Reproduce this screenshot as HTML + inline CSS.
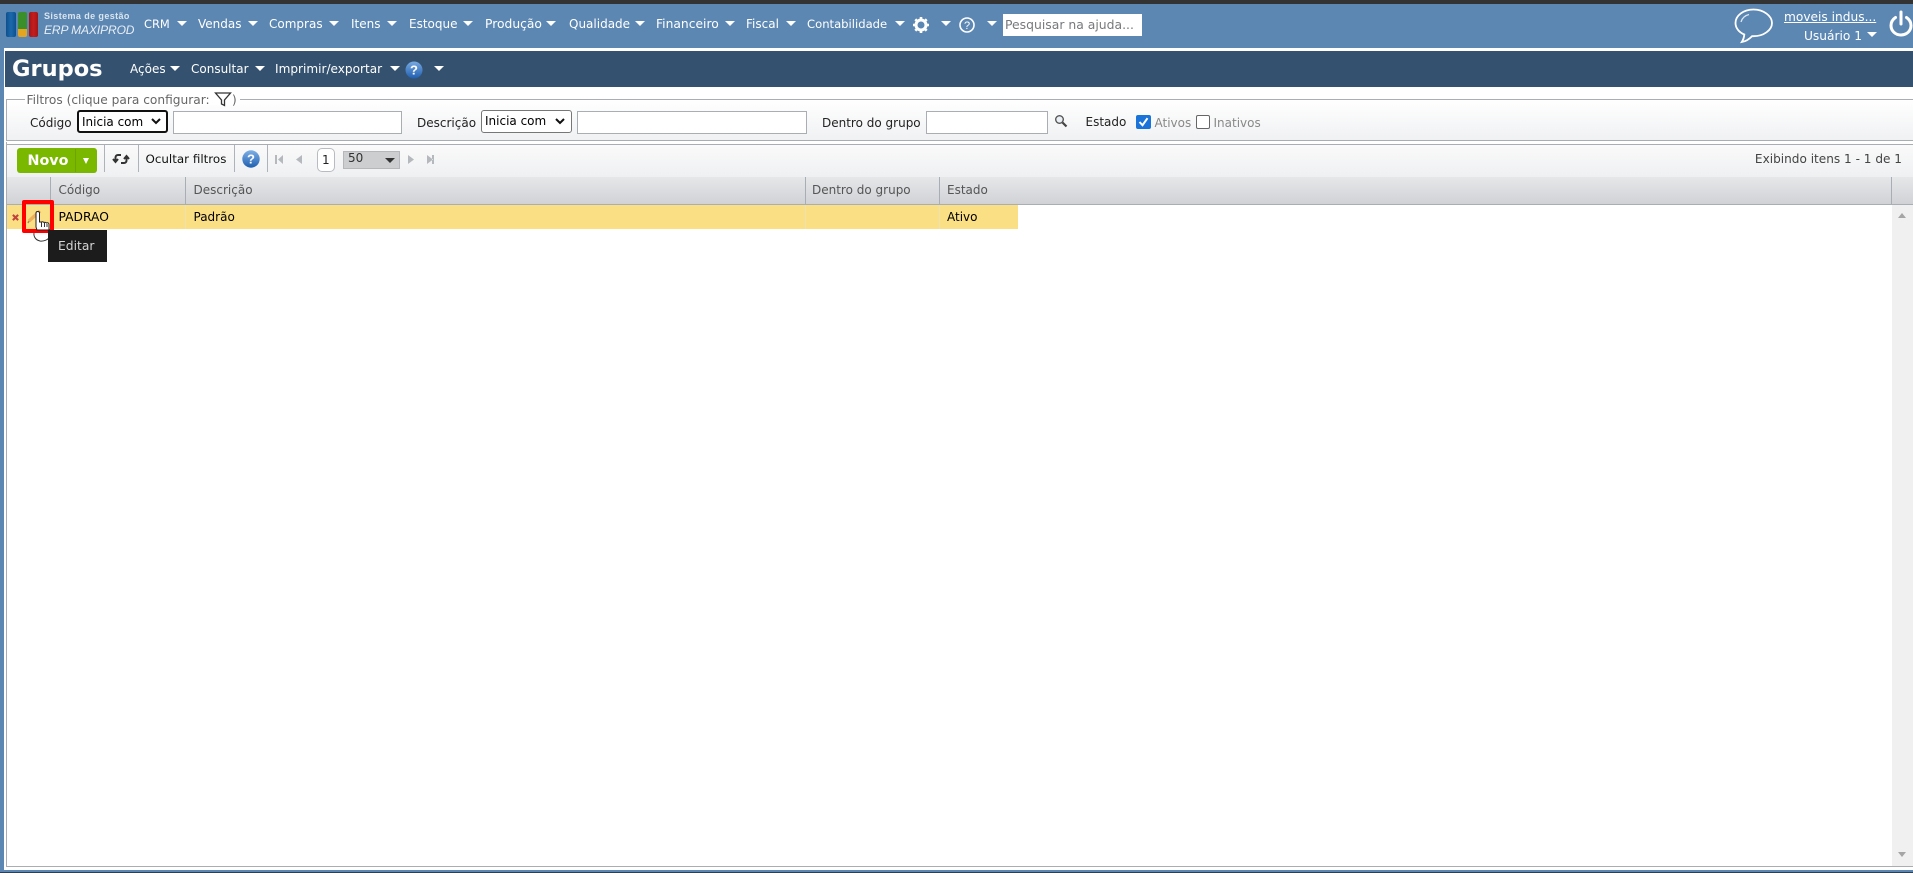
<!DOCTYPE html>
<html lang="pt-BR">
<head>
<meta charset="utf-8">
<title>Grupos</title>
<style>
html,body{margin:0;padding:0;width:1913px;height:873px;overflow:hidden;background:#fff}
body{position:relative;font:12px/14px "DejaVu Sans","Liberation Sans",sans-serif;color:#000}
.a{position:absolute;white-space:nowrap}
.b{position:absolute}
.n{position:absolute;white-space:nowrap;color:#fff;top:17px;font-size:12px;line-height:15px}
.c{position:absolute;width:0;height:0;border-left:5px solid transparent;border-right:5px solid transparent;border-top:5px solid #fff}
.l{position:absolute;white-space:nowrap;top:116px;font-size:12px;line-height:14px;color:#222}
.g{position:absolute;white-space:nowrap;color:#888;font-size:12px;line-height:14px;top:116px}
.i{position:absolute;box-sizing:border-box;background:#fff;border:1px solid #a9aeb3;top:111px;height:23px}
.s{position:absolute;box-sizing:border-box;background:#fff;top:110px;height:23px;font-size:12px;line-height:20px;padding-left:3px;white-space:nowrap}
.sep{position:absolute;width:1px;background:#aeb3b9;top:145px;height:27px}
.h{position:absolute;top:177px;height:27px;line-height:27px;color:#555;font-size:12px;white-space:nowrap}
.hs{position:absolute;top:177px;width:1px;height:27px;background:#a9aeb5}
.rs{position:absolute;top:205px;width:1px;height:24px;background:#efe2b0}
.t{position:absolute;top:210px;line-height:14px;font-size:12px;white-space:nowrap;color:#000}
svg{position:absolute;display:block;overflow:visible}
</style>
</head>
<body>
<!-- top frame -->
<div class="b" style="left:0;top:0;width:1913px;height:4px;background:#333"></div>
<div class="b" style="left:0;top:4px;width:1913px;height:44px;background:#5c87b2"></div>
<div class="b" style="left:0;top:48px;width:4px;height:822px;background:#5c87b2"></div>
<div class="b" style="left:0;top:870px;width:1913px;height:2px;background:#5c87b2"></div>
<div class="b" style="left:0;top:872px;width:1913px;height:1px;background:#2f3f52"></div>

<!-- logo -->
<div class="b" style="left:6px;top:12px;width:10px;height:25px;background:linear-gradient(90deg,#0d4f8c,#1c69ad 50%,#0d4f8c);border-radius:2px"></div>
<div class="b" style="left:18px;top:12px;width:9px;height:17px;background:#3b8f2a;border-radius:2px 2px 0 0"></div>
<div class="b" style="left:18px;top:29px;width:9px;height:8px;background:#e3a51f;border-radius:0 0 2px 2px"></div>
<div class="b" style="left:29px;top:12px;width:9px;height:25px;background:linear-gradient(90deg,#a51414,#c41f1f 50%,#a51414);border-radius:2px"></div>
<div class="a" style="left:44px;top:10px;color:#dbe5ef;font:bold 9px/12px 'Liberation Sans',sans-serif;letter-spacing:.4px">Sistema de gestão</div>
<div class="a" style="left:44px;top:23px;color:#e8eef5;font:italic 12px/14px 'Liberation Sans',sans-serif;letter-spacing:-.1px">ERP MAXIPROD</div>

<!-- main nav -->
<div class="n" style="left:144px;font-size:11.400px">CRM</div><div class="c" style="left:177px;top:21px"></div>
<div class="n" style="left:198px">Vendas</div><div class="c" style="left:248px;top:21px"></div>
<div class="n" style="left:269px">Compras</div><div class="c" style="left:329px;top:21px"></div>
<div class="n" style="left:351px">Itens</div><div class="c" style="left:387px;top:21px"></div>
<div class="n" style="left:409px">Estoque</div><div class="c" style="left:463px;top:21px"></div>
<div class="n" style="left:485px;font-size:12.300px">Produção</div><div class="c" style="left:546px;top:21px"></div>
<div class="n" style="left:569px">Qualidade</div><div class="c" style="left:635px;top:21px"></div>
<div class="n" style="left:656px;font-size:12.300px">Financeiro</div><div class="c" style="left:725px;top:21px"></div>
<div class="n" style="left:746px">Fiscal</div><div class="c" style="left:786px;top:21px"></div>
<div class="n" style="left:807px;font-size:11.600px">Contabilidade</div><div class="c" style="left:895px;top:21px"></div>
<svg style="left:912px;top:16px" width="18" height="18" viewBox="0 0 18 18"><circle cx="9" cy="9" r="5" fill="none" stroke="#fff" stroke-width="3"/><path d="M9 1v3M9 14v3M1 9h3M14 9h3M3.300 3.300l2.200 2.200M12.500 12.500l2.200 2.200M14.700 3.300l-2.200 2.200M5.500 12.500l-2.200 2.200" stroke="#fff" stroke-width="2.600"/></svg>
<div class="c" style="left:941px;top:21px"></div>
<svg style="left:959px;top:17px" width="16" height="16" viewBox="0 0 16 16"><circle cx="8" cy="8" r="7" fill="none" stroke="#fff" stroke-width="1.600"/><text x="8" y="12" text-anchor="middle" font-family="Liberation Sans" font-size="11" fill="#fff">?</text></svg>
<div class="c" style="left:987px;top:21px"></div>
<div class="b" style="left:1003px;top:14px;width:139px;height:22px;background:#fff"></div>
<div class="a" style="left:1005px;top:17px;line-height:15px;font-size:12.400px;color:#77797c">Pesquisar na ajuda...</div>

<!-- user -->
<svg style="left:1734px;top:8px" width="40" height="36" viewBox="0 0 40 36"><path d="M19.500 1.500C9.500 1.500 1.500 7.500 1.500 15c0 5 3.500 9.300 8.800 11.500-.2 2.500-.9 5-2.500 7.500 4.200-.7 7.800-3.300 10.200-5.800h1.500c10 0 18.500-6 18.500-13.200S29.500 1.500 19.500 1.500z" fill="none" stroke="#fff" stroke-width="1.800"/><path d="M7 14c1-4 4-6.500 8-7.500" fill="none" stroke="#dbe6f0" stroke-width="1.300"/></svg>
<div class="a" style="left:1784px;top:10px;color:#fff;font-size:12.200px;text-decoration:underline">moveis indus...</div>
<div class="a" style="left:1804px;top:29px;color:#fff;font-size:12.200px">Usuário 1</div>
<div class="c" style="left:1867px;top:32px"></div>
<svg style="left:1889px;top:10px" width="24" height="27" viewBox="0 0 24 27"><path d="M6.500 7.500C3.500 9.500 2 12.500 2 15.500 2 21 6.500 25 12 25s10-4 10-9.500c0-3-1.500-6-4.500-8" fill="none" stroke="#fff" stroke-width="3" stroke-linecap="round"/><path d="M12 2v12" stroke="#fff" stroke-width="3" stroke-linecap="round"/></svg>

<!-- title bar -->
<div class="b" style="left:5px;top:51px;width:1908px;height:36px;background:#34526f"></div>
<div class="a" style="left:12px;top:55px;color:#fff;font:bold 22.500px/28px 'DejaVu Sans',sans-serif">Grupos</div>
<div class="n" style="left:130px;top:62px">Ações</div><div class="c" style="left:170px;top:66px"></div>
<div class="n" style="left:191px;top:62px">Consultar</div><div class="c" style="left:255px;top:66px"></div>
<div class="n" style="left:275px;top:62px;font-size:12.100px">Imprimir/exportar</div><div class="c" style="left:390px;top:66px"></div>
<svg style="left:405px;top:61px" width="18" height="18" viewBox="0 0 18 18"><defs><linearGradient id="q1" x1="0" y1="0" x2="0" y2="1"><stop offset="0" stop-color="#79a9e0"/><stop offset="1" stop-color="#1f5fb0"/></linearGradient></defs><circle cx="9" cy="9" r="8.500" fill="url(#q1)"/><text x="9" y="13.500" text-anchor="middle" font-family="Liberation Sans" font-weight="bold" font-size="13" fill="#fff">?</text></svg>
<div class="c" style="left:434px;top:66px"></div>

<!-- filters -->
<div class="b" style="left:6px;top:99px;width:1907px;height:42px;box-sizing:border-box;border:1px solid #a9aeb3;border-right:0;background:linear-gradient(#fff,#f0f1f3)"></div>
<div class="b" style="left:25px;top:93px;width:215px;height:12px;background:#fff"></div>
<div class="a" style="left:26.500px;top:93px;color:#666;font-size:12.200px">Filtros (clique para configurar:</div>
<svg style="left:214px;top:92px" width="18" height="15" viewBox="0 0 18 15"><path d="M1.500 1h15L10.500 8v5.500l-3-1.500V8z" fill="none" stroke="#333" stroke-width="1.300"/></svg>
<div class="a" style="left:232px;top:93px;color:#666;font-size:12px">)</div>

<div class="l" style="left:30px">Código</div>
<div class="s" style="left:77px;width:91px;border:2px solid #111;border-radius:3px">Inicia com</div>
<svg style="left:151px;top:118px" width="10" height="7" viewBox="0 0 10 7"><path d="M1 1l4 4 4-4" fill="none" stroke="#111" stroke-width="2"/></svg>
<div class="i" style="left:173px;width:229px"></div>
<div class="l" style="left:417px">Descrição</div>
<div class="s" style="left:481px;width:91px;border:1px solid #777;border-radius:3px;line-height:21px">Inicia com</div>
<svg style="left:555px;top:118px" width="10" height="7" viewBox="0 0 10 7"><path d="M1 1l4 4 4-4" fill="none" stroke="#111" stroke-width="2"/></svg>
<div class="i" style="left:577px;width:230px"></div>
<div class="l" style="left:822px">Dentro do grupo</div>
<div class="i" style="left:926px;width:122px"></div>
<svg style="left:1054px;top:114px" width="14" height="14" viewBox="0 0 14 14"><circle cx="5.500" cy="5.500" r="3.800" fill="#eaf0f5" stroke="#555" stroke-width="1.400"/><path d="M8.500 8.500l4 4" stroke="#444" stroke-width="2.200"/></svg>
<div class="l" style="left:1085.500px;top:115px">Estado</div>
<div class="b" style="left:1136px;top:115px;width:15px;height:14px;background:#1a73d9;border-radius:2px"></div>
<svg style="left:1136px;top:115px" width="15" height="14" viewBox="0 0 15 14"><path d="M3.500 7l3 3.200 5-7" fill="none" stroke="#fff" stroke-width="2"/></svg>
<div class="g" style="left:1154.500px">Ativos</div>
<div class="b" style="left:1196px;top:115px;width:14px;height:14px;box-sizing:border-box;background:#fff;border:1px solid #666;border-radius:2px"></div>
<div class="g" style="left:1213.500px">Inativos</div>

<!-- toolbar -->
<div class="b" style="left:6px;top:144px;width:1907px;height:33px;background:linear-gradient(#fafafa,#eff0f2);border-top:1px solid #a9aeb3;box-sizing:border-box"></div>
<div class="b" style="left:6px;top:142px;width:1px;height:725px;background:#a9aeb3"></div>
<div class="b" style="left:17px;top:148px;width:80px;height:25px;background:#7ab800;border-radius:3px"></div>
<div class="b" style="left:75px;top:149px;width:1px;height:23px;background:#6da400"></div>
<div class="a" style="left:27.500px;top:153px;color:#fff;font:bold 14.300px/17px 'DejaVu Sans',sans-serif">Novo</div>
<div class="b" style="left:83px;top:158px;width:0;height:0;border-left:3.500px solid transparent;border-right:3.500px solid transparent;border-top:6px solid #fff"></div>
<div class="sep" style="left:104px"></div>
<svg style="left:113px;top:152px" width="16" height="14" viewBox="0 0 16 14"><path d="M8 3H5C3.500 3 2.500 4 2.500 5.500V9M0 7l2.500 3L5 7" fill="none" stroke="#333" stroke-width="2"/><path d="M8 11h3c1.500 0 2.500-1 2.500-2.500V5M11 7l2.500-3L16 7" fill="none" stroke="#333" stroke-width="2"/></svg>
<div class="sep" style="left:138px"></div>
<div class="a" style="left:145.500px;top:152px;font-size:11.900px;color:#111">Ocultar filtros</div>
<div class="sep" style="left:234px"></div>
<svg style="left:242px;top:150px" width="18" height="18" viewBox="0 0 18 18"><defs><linearGradient id="q2" x1="0" y1="0" x2="0" y2="1"><stop offset="0" stop-color="#7fb0e6"/><stop offset="1" stop-color="#1f5fb0"/></linearGradient></defs><circle cx="9" cy="9" r="8.700" fill="url(#q2)"/><text x="9" y="13.500" text-anchor="middle" font-family="Liberation Sans" font-weight="bold" font-size="13" fill="#fff">?</text></svg>
<div class="sep" style="left:267px"></div>
<svg style="left:275px;top:154px" width="160" height="11" viewBox="0 0 160 11" fill="#b5b8bc"><path d="M0 1h2v9H0zM8 1v9L3 5.500zM27 1v9l-6-4.500zM133 1v9l6-4.500zM152 1v9l6-4.500zM157 1h2v9h-2z"/></svg>
<div class="b" style="left:317px;top:148px;width:18px;height:24px;box-sizing:border-box;background:#fff;border:1px solid #b8bcc1;border-radius:5px"></div>
<div class="a" style="left:322px;top:153px;font-size:12px;color:#222">1</div>
<div class="b" style="left:343px;top:151px;width:57px;height:18px;box-sizing:border-box;background:#ccced0;border:1px solid #b5b8bb"></div>
<div class="a" style="left:348px;top:151px;font-size:12px;color:#333">50</div>
<div class="b" style="left:385px;top:158px;width:0;height:0;border-left:5px solid transparent;border-right:5px solid transparent;border-top:5px solid #333"></div>
<div class="a" style="right:11px;top:152px;font-size:12.100px;color:#444">Exibindo itens 1 - 1 de 1</div>

<!-- grid header -->
<div class="b" style="left:7px;top:177px;width:1906px;height:27px;background:linear-gradient(#e6e7e9,#d0d2d6)"></div>
<div class="b" style="left:7px;top:204px;width:1906px;height:1px;background:#a9aeb5"></div>
<div class="hs" style="left:50px"></div>
<div class="hs" style="left:185px"></div>
<div class="hs" style="left:805px"></div>
<div class="hs" style="left:939px"></div>
<div class="hs" style="left:1891px"></div>
<div class="h" style="left:58.500px">Código</div>
<div class="h" style="left:193.500px">Descrição</div>
<div class="h" style="left:812px">Dentro do grupo</div>
<div class="h" style="left:947px">Estado</div>

<!-- row -->
<div class="b" style="left:7px;top:205px;width:1011px;height:24px;background:#fbdf85"></div>
<div class="rs" style="left:50px"></div>
<div class="rs" style="left:185px"></div>
<div class="rs" style="left:805px"></div>
<div class="rs" style="left:939px"></div>
<div class="t" style="left:58.500px;font-size:12.300px">PADRAO</div>
<div class="t" style="left:193.500px">Padrão</div>
<div class="t" style="left:947px">Ativo</div>
<svg style="left:12px;top:214px" width="7" height="7" viewBox="0 0 8 8"><path d="M1 1l6 6M7 1L1 7" stroke="#c0443c" stroke-width="2.400"/></svg>
<svg style="left:27px;top:208px" width="16" height="16" viewBox="0 0 16 16"><path d="M2 13L13 3" stroke="#eeb05a" stroke-width="3.500"/><path d="M1 15l1-2" stroke="#a08a60" stroke-width="1.500"/></svg>

<!-- scrollbar -->
<div class="b" style="left:1892px;top:205px;width:21px;height:661px;background:#f0f0f0"></div>
<div class="b" style="left:1898px;top:213px;width:0;height:0;border-left:4.500px solid transparent;border-right:4.500px solid transparent;border-bottom:5px solid #a5a5a5"></div>
<div class="b" style="left:1898px;top:852px;width:0;height:0;border-left:4.500px solid transparent;border-right:4.500px solid transparent;border-top:5px solid #a5a5a5"></div>
<div class="b" style="left:6px;top:866px;width:1907px;height:1px;background:#a9aeb3"></div>

<!-- highlight, cursor, tooltip -->
<div class="b" style="left:22px;top:200px;width:32px;height:33px;box-sizing:border-box;border:4px solid #f00;border-radius:2px"></div>
<svg style="left:33px;top:211px" width="18" height="32" viewBox="0 0 18 32"><path d="M1 22c-.5 3.500 1.500 7 6 8 3.500.5 7-1 9-3" fill="#fff" stroke="#333" stroke-width="1"/><path d="M3 2c0-2 3.500-2 3.500 0v9h2c1-.5 2 0 2.500 .5 1-.5 2 0 2.500 .5 1.500-.5 2.500 0 2.500 1.500V19H4L3 16z" fill="#fff" stroke="#222" stroke-width="1"/><path d="M8.500 11v5M11.500 12v4M14 13v3" stroke="#333" stroke-width="1"/></svg>
<div class="b" style="left:48px;top:230px;width:59px;height:32px;background:#1c1c1c"></div>
<div class="a" style="left:58px;top:239px;color:#d5d5d5;font-size:12.300px">Editar</div>
</body>
</html>
